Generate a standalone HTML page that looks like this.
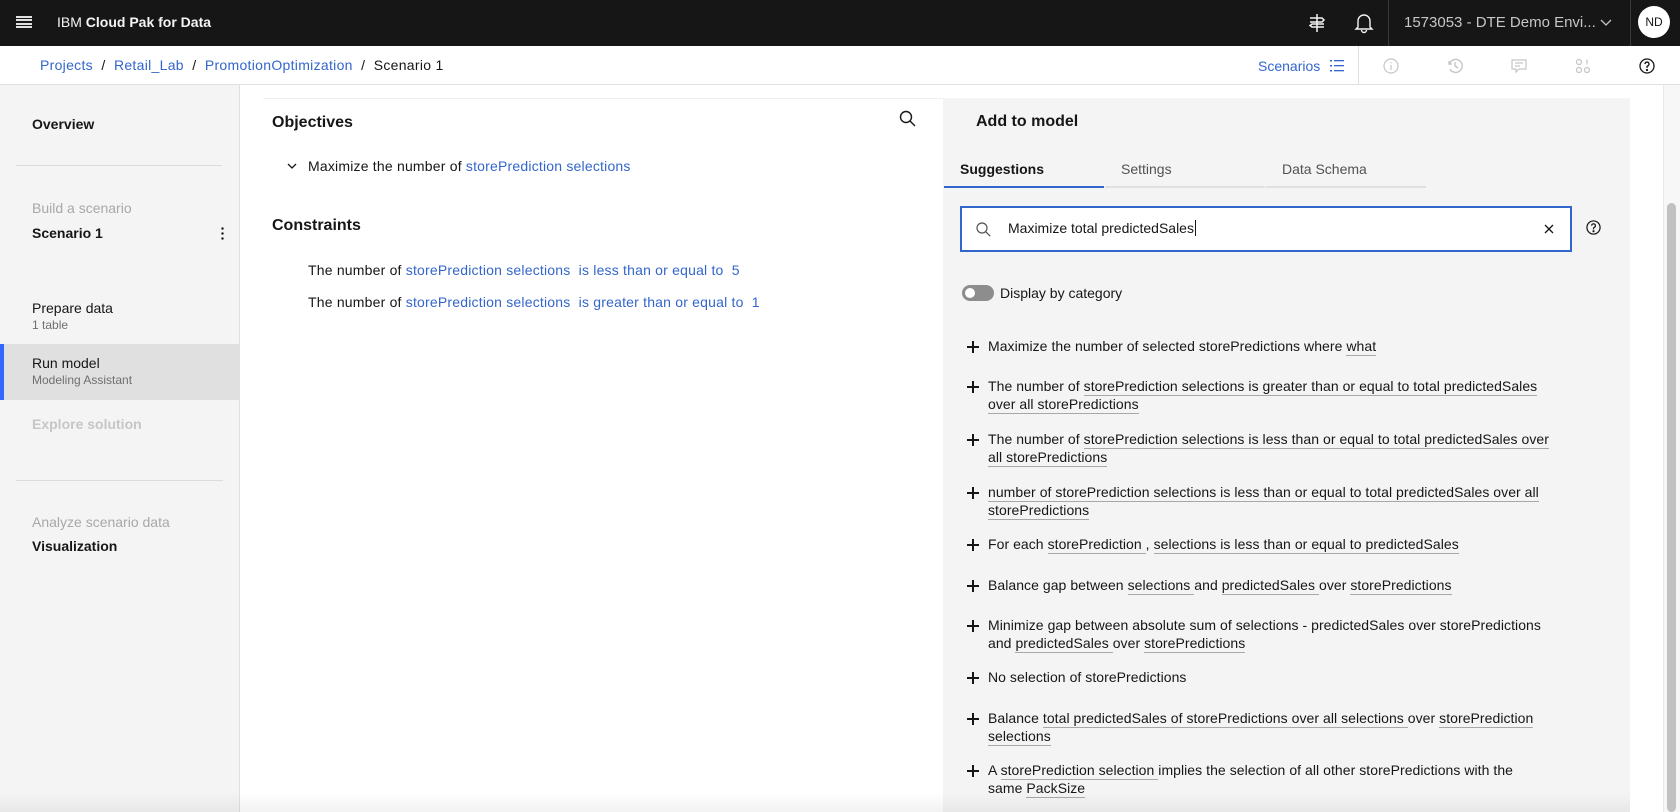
<!DOCTYPE html>
<html><head><meta charset="utf-8"><style>
*{margin:0;padding:0;box-sizing:border-box}
body{width:1680px;height:812px;overflow:hidden;font-family:"Liberation Sans",sans-serif;background:#fff;color:#161616;position:relative}
.a{position:absolute;white-space:nowrap}
.hdr{position:absolute;left:0;top:0;width:1680px;height:46px;background:#161616}
.bc{position:absolute;left:0;top:46px;width:1680px;height:39px;background:#fff;border-bottom:1px solid #e0e0e0}
.blue{color:#3366cc}
.sb{position:absolute;left:0;top:85px;width:240px;height:727px;background:#f4f4f4;border-right:1px solid #e0e0e0}
.panel{position:absolute;left:943px;top:98px;width:687px;height:714px;background:#f4f4f4}
.it{position:absolute;left:988px;font-size:14px;letter-spacing:0.05px;line-height:18px;color:#161616;white-space:nowrap}
.it u{text-decoration:none;border-bottom:1px solid #a8a8a8;padding-bottom:1px}
.pl{position:absolute;left:967px;width:12px;height:12px}
.pl:before{content:"";position:absolute;left:5px;top:0;width:2px;height:12px;background:#161616}
.pl:after{content:"";position:absolute;left:0;top:5px;width:12px;height:2px;background:#161616}
</style></head><body>
<div class="hdr">
  <div class="a" style="left:16px;top:16px;width:16px;height:12px">
    <div style="height:2px;background:#e0e0e0;margin-bottom:1.3px"></div><div style="height:2px;background:#e0e0e0;margin-bottom:1.3px"></div><div style="height:2px;background:#e0e0e0;margin-bottom:1.3px"></div><div style="height:2px;background:#e0e0e0"></div>
  </div>
  <div class="a" style="left:57px;top:14px;font-size:14px;color:#f4f4f4">IBM <b>Cloud Pak for Data</b></div>
  <svg class="a" style="left:1307px;top:13px" width="20" height="20" viewBox="0 0 20 20" fill="none" stroke="#f4f4f4" stroke-width="1.5"><path d="M10 1v18M3 5h12l2 2-2 2H3M17 11H5l-2 1.5 2 1.5h12"/></svg>
  <svg class="a" style="left:1354px;top:12px" width="20" height="22" viewBox="0 0 20 22" fill="none" stroke="#f4f4f4" stroke-width="1.4"><path d="M4 15V9a6 6 0 0 1 12 0v6l2 2H2z M7.5 18a2.5 2.5 0 0 0 5 0"/></svg>
  <div class="a" style="left:1388px;top:0;width:1px;height:46px;background:#393939"></div>
  <div class="a" style="left:1404px;top:14px;font-size:15px;color:#c6c6c6">1573053 - DTE Demo Envi...</div>
  <svg class="a" style="left:1600px;top:19px" width="12" height="8" viewBox="0 0 12 8" fill="none" stroke="#c6c6c6" stroke-width="1.3"><path d="M1 1l5 5 5-5"/></svg>
  <div class="a" style="left:1630px;top:0;width:1px;height:46px;background:#393939"></div>
  <div class="a" style="left:1638px;top:6px;width:32px;height:32px;border-radius:50%;background:#fff;color:#161616;font-size:12px;text-align:center;line-height:32px">ND</div>
</div>
<div class="bc">
  <div class="a" style="left:40px;top:11px;font-size:14px;letter-spacing:0.3px"><span class="blue">Projects</span>&nbsp; / &nbsp;<span class="blue">Retail_Lab</span>&nbsp; / &nbsp;<span class="blue">PromotionOptimization</span>&nbsp; / &nbsp;Scenario 1</div>
  <div class="a blue" style="left:1258px;top:12px;font-size:14px">Scenarios</div>
  <svg class="a" style="left:1330px;top:13px" width="14" height="14" viewBox="0 0 14 14" fill="#3366cc"><rect x="0" y="1" width="2" height="1.5"/><rect x="4" y="1" width="10" height="1.3"/><rect x="0" y="6" width="2" height="1.5"/><rect x="4" y="6" width="10" height="1.3"/><rect x="0" y="11" width="2" height="1.5"/><rect x="4" y="11" width="10" height="1.3"/></svg>
  <div class="a" style="left:1358px;top:0;width:1px;height:39px;background:#e0e0e0"></div>
  <svg class="a" style="left:1383px;top:12px" width="16" height="16" viewBox="0 0 16 16" fill="none" stroke="#c6c6c6" stroke-width="1.2"><circle cx="8" cy="8" r="7"/><path d="M8 7v5M8 4v1.2"/></svg>
  <svg class="a" style="left:1447px;top:12px" width="16" height="16" viewBox="0 0 16 16" fill="none" stroke="#c6c6c6" stroke-width="1.4"><path d="M2 3v3h3M2.5 6A6.5 6.5 0 1 1 3 11"/><path d="M8 4v4l3 2"/></svg>
  <svg class="a" style="left:1511px;top:12px" width="16" height="16" viewBox="0 0 16 16" fill="none" stroke="#c6c6c6" stroke-width="1.2"><path d="M1 2h14v9H8l-3 3v-3H1z M4 5h8M4 8h5"/></svg>
  <svg class="a" style="left:1575px;top:12px" width="16" height="16" viewBox="0 0 16 16" fill="none" stroke="#c6c6c6" stroke-width="1.2"><circle cx="4" cy="4" r="2.5"/><path d="M12 1.5v5"/><circle cx="4" cy="12" r="2.5"/><circle cx="12" cy="12" r="2.5"/></svg>
  <svg class="a" style="left:1639px;top:12px" width="16" height="16" viewBox="0 0 16 16" fill="none" stroke="#161616" stroke-width="1.3"><circle cx="8" cy="8" r="7"/><path d="M6 6a2 2 0 1 1 2.5 2c-.4.2-.5.6-.5 1v1"/><circle cx="8" cy="12" r=".5" fill="#161616"/></svg>
</div>
<div class="sb">
  <div class="a" style="left:32px;top:31px;font-size:14px;font-weight:bold">Overview</div>
  <div class="a" style="left:16px;top:80px;width:206px;height:1px;background:#dcdcdc"></div>
  <div class="a" style="left:32px;top:115px;font-size:14px;color:#a8a8a8">Build a scenario</div>
  <div class="a" style="left:32px;top:140px;font-size:14px;font-weight:bold">Scenario 1</div>
  <div class="a" style="left:221px;top:141px;width:3px;height:14px;background:radial-gradient(circle,#161616 1.2px,transparent 1.3px) 0 0/3px 5px"></div>
  <div class="a" style="left:32px;top:215px;font-size:14px">Prepare data</div>
  <div class="a" style="left:32px;top:233px;font-size:12px;color:#6f6f6f">1 table</div>
  <div class="a" style="left:0;top:259px;width:239px;height:56px;background:#e0e0e0"></div>
  <div class="a" style="left:0;top:259px;width:4px;height:56px;background:#3366ff"></div>
  <div class="a" style="left:32px;top:270px;font-size:14px">Run model</div>
  <div class="a" style="left:32px;top:288px;font-size:12px;color:#6f6f6f">Modeling Assistant</div>
  <div class="a" style="left:32px;top:331px;font-size:14px;font-weight:bold;color:#c6c6c6">Explore solution</div>
  <div class="a" style="left:16px;top:395px;width:207px;height:1px;background:#dcdcdc"></div>
  <div class="a" style="left:32px;top:429px;font-size:14px;color:#a8a8a8">Analyze scenario data</div>
  <div class="a" style="left:32px;top:453px;font-size:14px;font-weight:bold">Visualization</div>
</div>
<div class="a" style="left:263px;top:98px;width:680px;height:1px;background:#f0f0f0"></div>
<div class="a" style="left:272px;top:114px;font-size:16px;font-weight:bold">Objectives</div>
<svg class="a" style="left:899px;top:110px" width="17" height="17" viewBox="0 0 17 17" fill="none" stroke="#161616" stroke-width="1.4"><circle cx="7" cy="7" r="5.5"/><path d="M11 11l5 5"/></svg>
<svg class="a" style="left:287px;top:163px" width="10" height="7" viewBox="0 0 10 7" fill="none" stroke="#161616" stroke-width="1.3"><path d="M1 1l4 4 4-4"/></svg>
<div class="a" style="left:308px;top:158px;font-size:14px;letter-spacing:0.2px">Maximize the number of <span class="blue">storePrediction selections</span></div>
<div class="a" style="left:272px;top:217px;font-size:16px;font-weight:bold">Constraints</div>
<div class="a" style="left:308px;top:262px;font-size:14px;letter-spacing:0.2px">The number of <span class="blue">storePrediction selections &nbsp;is less than or equal to &nbsp;5</span></div>
<div class="a" style="left:308px;top:294px;font-size:14px;letter-spacing:0.2px">The number of <span class="blue">storePrediction selections &nbsp;is greater than or equal to &nbsp;1</span></div>
<div class="panel"></div>
<div class="a" style="left:976px;top:113px;font-size:16px;font-weight:bold">Add to model</div>
<div class="a" style="left:960px;top:161px;font-size:14px;font-weight:bold">Suggestions</div>
<div class="a" style="left:1121px;top:161px;font-size:14px;color:#525252">Settings</div>
<div class="a" style="left:1282px;top:161px;font-size:14px;color:#525252">Data Schema</div>
<div class="a" style="left:944px;top:186px;width:160px;height:2px;background:#3366cc"></div>
<div class="a" style="left:1105px;top:186px;width:160px;height:2px;background:#e0e0e0"></div>
<div class="a" style="left:1266px;top:186px;width:160px;height:2px;background:#e0e0e0"></div>
<div class="a" style="left:960px;top:206px;width:612px;height:46px;background:#fff;border:2px solid #3366cc"></div>
<svg class="a" style="left:976px;top:222px" width="15" height="15" viewBox="0 0 15 15" fill="none" stroke="#525252" stroke-width="1.2"><circle cx="6" cy="6" r="5"/><path d="M9.7 9.7l4.5 4.5"/></svg>
<div class="a" style="left:1008px;top:220px;font-size:14px">Maximize total predictedSales<span style="border-left:1px solid #161616;margin-left:1px"></span></div>
<svg class="a" style="left:1544px;top:224px" width="10" height="10" viewBox="0 0 10 10" stroke="#161616" stroke-width="1.3"><path d="M1 1l8 8M9 1l-8 8"/></svg>
<svg class="a" style="left:1586px;top:220px" width="15" height="15" viewBox="0 0 16 16" fill="none" stroke="#161616" stroke-width="1.3"><circle cx="8" cy="8" r="7"/><path d="M6 6a2 2 0 1 1 2.5 2c-.4.2-.5.6-.5 1v1"/><circle cx="8" cy="12" r=".5" fill="#161616"/></svg>
<div class="a" style="left:962px;top:285px;width:32px;height:16px;border-radius:8px;background:#8d8d8d"></div>
<div class="a" style="left:965px;top:288px;width:10px;height:10px;border-radius:50%;background:#fff"></div>
<div class="a" style="left:1000px;top:285px;font-size:14px">Display by category</div>

<div class="pl" style="top:341px"></div><div class="it" style="top:337px">Maximize the number of selected storePredictions where <u>what</u></div>
<div class="pl" style="top:381px"></div><div class="it" style="top:377px">The number of <u>storePrediction selections is greater than or equal to total predictedSales</u><br><u>over all storePredictions</u></div>
<div class="pl" style="top:434px"></div><div class="it" style="top:430px">The number of <u>storePrediction selections is less than or equal to total predictedSales over</u><br><u>all storePredictions</u></div>
<div class="pl" style="top:487px"></div><div class="it" style="top:483px"><u>number of storePrediction selections is less than or equal to total predictedSales over all</u><br><u>storePredictions</u></div>
<div class="pl" style="top:539px"></div><div class="it" style="top:535px">For each <u>storePrediction </u>, <u>selections is less than or equal to predictedSales</u></div>
<div class="pl" style="top:580px"></div><div class="it" style="top:576px">Balance gap between <u>selections </u>and <u>predictedSales </u>over <u>storePredictions</u></div>
<div class="pl" style="top:620px"></div><div class="it" style="top:616px">Minimize gap between absolute sum of selections - predictedSales over storePredictions<br>and <u>predictedSales </u>over <u>storePredictions</u></div>
<div class="pl" style="top:672px"></div><div class="it" style="top:668px">No selection of storePredictions</div>
<div class="pl" style="top:713px"></div><div class="it" style="top:709px">Balance <u>total predictedSales of storePredictions over all selections </u>over <u>storePrediction</u><br><u>selections</u></div>
<div class="pl" style="top:765px"></div><div class="it" style="top:761px">A <u>storePrediction selection </u>implies the selection of all other storePredictions with the<br>same <u>PackSize</u></div>

<div class="a" style="left:0;top:792px;width:1630px;height:20px;background:linear-gradient(rgba(0,0,0,0),rgba(0,0,0,0.05))"></div>
<div class="a" style="left:1663px;top:85px;width:17px;height:727px;background:#f7f7f7;border-left:1px solid #e8e8e8"></div>
<div class="a" style="left:1667px;top:203px;width:9px;height:609px;border-radius:5px;background:#c1c1c1"></div>
</body></html>
